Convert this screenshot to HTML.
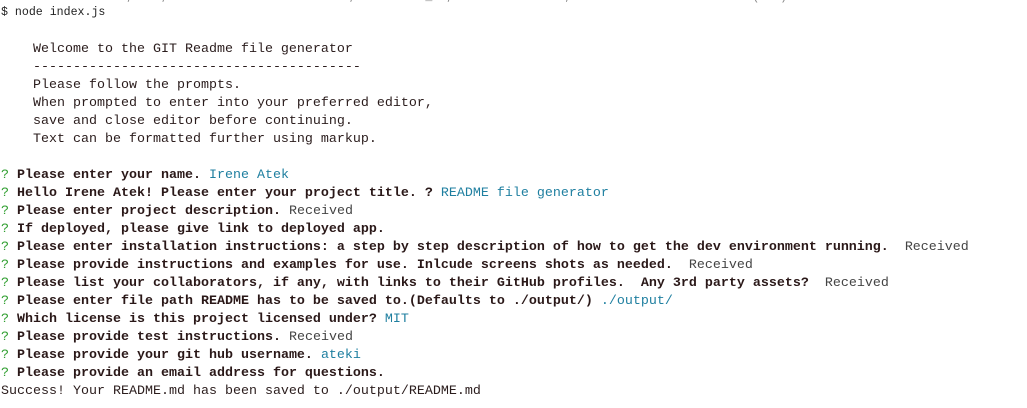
<!DOCTYPE html>
<html><head><meta charset="utf-8"><style>
html,body{margin:0;padding:0;background:#fff;width:1027px;height:408px;overflow:hidden}
body{font-family:"Liberation Mono",monospace;font-size:13.33px;color:#2a1c1c}
.l{position:absolute;left:1px;white-space:pre;line-height:18px;height:18px}
.q{color:#2f9e2f}
.b{font-weight:bold;color:#2a1818}
.a{color:#1f7fa0}
.r{color:#444}
.top{font-size:11.6px;color:#222}
</style></head><body>
<div class="l top" style="top:-11px;color:#888">                  ,    ,                          ,          _  ,                ,                          (   )</div>
<div class="l top" style="top:4px">$ node index.js</div>
<div class="l" style="top:41px">    Welcome to the GIT Readme file generator</div>
<div class="l" style="top:59px">    -----------------------------------------</div>
<div class="l" style="top:77px">    Please follow the prompts.</div>
<div class="l" style="top:95px">    When prompted to enter into your preferred editor,</div>
<div class="l" style="top:113px">    save and close editor before continuing.</div>
<div class="l" style="top:131px">    Text can be formatted further using markup.</div>
<div class="l" style="top:167px"><span class="q">?</span> <span class="b">Please enter your name.</span> <span class="a">Irene Atek</span></div>
<div class="l" style="top:185px"><span class="q">?</span> <span class="b">Hello Irene Atek! Please enter your project title. ?</span> <span class="a">README file generator</span></div>
<div class="l" style="top:203px"><span class="q">?</span> <span class="b">Please enter project description.</span> <span class="r">Received</span></div>
<div class="l" style="top:221px"><span class="q">?</span> <span class="b">If deployed, please give link to deployed app.</span></div>
<div class="l" style="top:239px"><span class="q">?</span> <span class="b">Please enter installation instructions: a step by step description of how to get the dev environment running. </span> <span class="r">Received</span></div>
<div class="l" style="top:257px"><span class="q">?</span> <span class="b">Please provide instructions and examples for use. Inlcude screens shots as needed. </span> <span class="r">Received</span></div>
<div class="l" style="top:275px"><span class="q">?</span> <span class="b">Please list your collaborators, if any, with links to their GitHub profiles.  Any 3rd party assets? </span> <span class="r">Received</span></div>
<div class="l" style="top:293px"><span class="q">?</span> <span class="b">Please enter file path README has to be saved to.(Defaults to ./output/)</span> <span class="a">./output/</span></div>
<div class="l" style="top:311px"><span class="q">?</span> <span class="b">Which license is this project licensed under?</span> <span class="a">MIT</span></div>
<div class="l" style="top:329px"><span class="q">?</span> <span class="b">Please provide test instructions.</span> <span class="r">Received</span></div>
<div class="l" style="top:347px"><span class="q">?</span> <span class="b">Please provide your git hub username.</span> <span class="a">ateki</span></div>
<div class="l" style="top:365px"><span class="q">?</span> <span class="b">Please provide an email address for questions.</span></div>
<div class="l" style="top:383px">Success! Your README.md has been saved to ./output/README.md</div>
</body></html>
